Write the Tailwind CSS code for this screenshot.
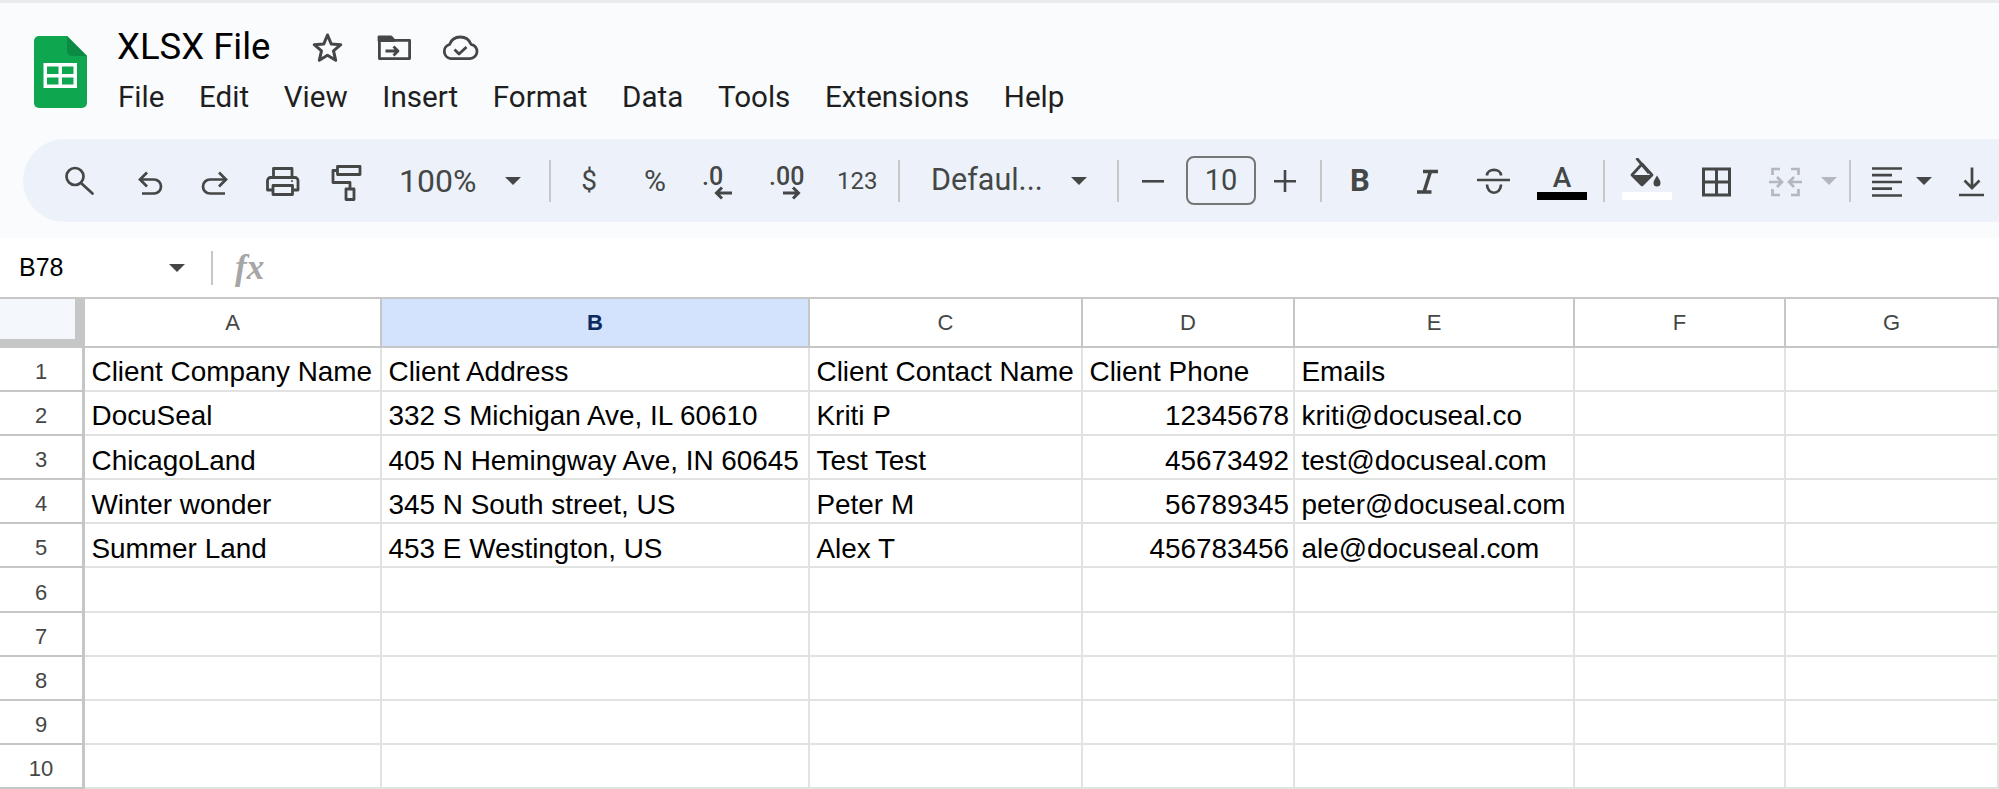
<!DOCTYPE html>
<html lang="en">
<head>
  <meta charset="UTF-8" />
  <title>XLSX File - Google Sheets</title>
  <script src="https://cdn.jsdelivr.net/npm/@tailwindcss/browser@4"></script>
</head>
<body class="bg-white overflow-hidden font-['Liberation_Sans',sans-serif]">
<div class="w-[1999px] h-[789px] overflow-hidden flex flex-col">

  <!-- title + menus -->
  <div class="h-[139px] bg-[#f9fbfd] border-t-[3px] border-[#e8eaed] flex pl-[34px] pt-[33px] shrink-0">
    <svg class="w-[53px] h-[72px]" viewBox="0 0 53 72">
      <path d="M5 0H33L53 20V67a5 5 0 0 1-5 5H5a5 5 0 0 1-5-5V5a5 5 0 0 1 5-5z" fill="#0fa650"/>
      <path d="M33 0L53 20H38a5 5 0 0 1-5-5z" fill="#0a8a43"/>
      <path d="M9.500 27H43V52H9.500z" fill="#fff"/>
      <path d="M13 30.500H24.500V38H13zM28 30.500H39.500V38H28zM13 41.500H24.500V48.500H13zM28 41.500H39.500V48.500H28z" fill="#0fa650"/>
    </svg>
    <div class="ml-[30px] -mt-[9px]">
      <div class="flex items-center h-[42px]">
        <span class="-mt-[2px] font-['Roboto',sans-serif] text-[36.5px] text-black w-[152px] whitespace-nowrap">XLSX File</span>
        <svg class="ml-[41px] w-[36px] h-[36px]" viewBox="0 0 36 36" fill="none" stroke="#444746" stroke-width="3" stroke-linejoin="round"><path d="M17.500 5L21.200 13.900 30.800 14.700 23.500 20.900 25.700 30.300 17.500 25.300 9.300 30.300 11.500 20.900 4.200 14.700 13.800 13.900z"/></svg>
        <svg class="ml-[30px] w-[38px] h-[36px]" viewBox="0 0 38 36" fill="none" stroke="#444746" stroke-width="2.800" stroke-linejoin="round"><path d="M3.400 28.600V7.400H15l3 3H33.600V28.600z"/><path d="M3 7H15l3 3.500H3z" fill="#444746"/><path d="M9.500 21H22M17.500 16.500L22 21 17.500 25.500"/></svg>
        <svg class="ml-[26px] w-[40px] h-[36px]" viewBox="0 0 40 36" fill="none" stroke="#444746" stroke-width="2.800" stroke-linejoin="round"><path d="M11 28.600H30a7.200 7.200 0 0 0 1-14.300A11.500 11.500 0 0 0 9.500 14.500 7.200 7.200 0 0 0 11 28.600z"/><path d="M14.500 19.500L19 24 26.500 17"/></svg>
      </div>
      <nav class="flex mt-[10px] ml-[1px] gap-[34.6px] font-['Roboto',sans-serif] text-[29.6px] leading-[36px] text-[#1f1f1f]">
        <span>File</span><span>Edit</span><span>View</span><span>Insert</span><span>Format</span><span>Data</span><span>Tools</span><span>Extensions</span><span>Help</span>
      </nav>
    </div>
  </div>

  <!-- toolbar -->
  <div class="bg-[#f9fbfd] pl-[23px] shrink-0">
    <div class="h-[83px] bg-[#edf2fa] rounded-l-[42px] flex items-center pl-[36px] font-['Roboto',sans-serif] text-[#444746]">
      <svg class="w-[40px] h-[40px]" viewBox="0 0 40 40" fill="none" stroke="#444746" stroke-width="2.700"><circle cx="16" cy="15.500" r="8.500"/><path d="M22 22L33.500 32.500" stroke-linecap="round"/></svg>
      <svg class="ml-[30px] w-[40px] h-[40px]" viewBox="0 0 40 40" fill="none" stroke="#444746" stroke-width="2.700"><path d="M18 11.500L11 18.500 18 25.500"/><path d="M11 18.500H25a7 7 0 0 1 0 14H13"/></svg>
      <svg class="ml-[26px] w-[40px] h-[40px]" viewBox="0 0 40 40" fill="none" stroke="#444746" stroke-width="2.700"><path d="M24 11.500L31 18.500 24 25.500"/><path d="M31 18.500H15a7 7 0 0 0 0 14H30"/></svg>
      <svg class="ml-[27px] w-[40px] h-[40px]" viewBox="0 0 40 40" fill="none" stroke="#444746" stroke-width="2.800" stroke-linejoin="round"><path d="M11.500 16V7.500H30V16"/><path d="M10 29H5.500V19.500a3 3 0 0 1 3-3H33a3 3 0 0 1 3 3V29H31"/><path d="M11 24.500H30.500V33.500H11z"/><circle cx="30" cy="20" r="1" fill="#444746" stroke="none"/></svg>
      <svg class="ml-[25px] w-[40px] h-[40px]" viewBox="0 0 40 40" fill="none" stroke="#444746" stroke-width="2.800" stroke-linejoin="round"><path d="M10.500 5.500H33V13.500H10.500z"/><path d="M10.500 9.500H6V21.500H23V28"/><path d="M19 28H27V38.500H19z"/></svg>
      <span class="ml-[32px] w-[77px] text-[32px] leading-none whitespace-nowrap">100%</span>
      <svg class="ml-[29px] w-[16px] h-[8px]" viewBox="0 0 16 8"><path d="M0 0h16L8 8z" fill="#444746"/></svg>
      <div class="ml-[28px] w-[2px] h-[42px] bg-[#c7c7c7]"></div>
      <span class="ml-[18px] w-[40px] text-center text-[28px] leading-none">$</span>
      <span class="ml-[26px] w-[40px] text-center text-[30px] leading-none">%</span>
      <div class="ml-[25px] w-[40px] h-[40px] relative text-[25px] font-medium leading-none">
        <span class="absolute left-[2px] top-[3px]">.0</span>
        <svg class="absolute left-[14px] top-[25px] w-[18px] h-[14px]" viewBox="0 0 18 14" fill="none" stroke="#444746" stroke-width="3"><path d="M18 7H3M8 1.500L2.500 7 8 12.500"/></svg>
      </div>
      <div class="ml-[28px] w-[40px] h-[40px] relative text-[25px] font-medium leading-none">
        <span class="absolute left-[1px] top-[3px]">.00</span>
        <svg class="absolute left-[15px] top-[25px] w-[18px] h-[14px]" viewBox="0 0 18 14" fill="none" stroke="#444746" stroke-width="3"><path d="M0 7h15M10 1.500L15.500 7 10 12.500"/></svg>
      </div>
      <span class="ml-[29px] w-[40px] text-center text-[24px] leading-none">123</span>
      <div class="ml-[21px] w-[2px] h-[42px] bg-[#c7c7c7]"></div>
      <span class="ml-[31px] w-[112px] text-[30.500px] leading-none whitespace-nowrap">Defaul...</span>
      <svg class="ml-[28px] w-[16px] h-[8px]" viewBox="0 0 16 8"><path d="M0 0h16L8 8z" fill="#444746"/></svg>
      <div class="ml-[30px] w-[2px] h-[42px] bg-[#c7c7c7]"></div>
      <svg class="ml-[14px] w-[40px] h-[40px]" viewBox="0 0 40 40"><path d="M9 19h22v2.600H9z" fill="#444746"/></svg>
      <div class="ml-[13px] w-[70px] h-[49px] border-2 border-[#747775] rounded-[8px] flex items-center justify-center text-[29px]">10</div>
      <svg class="ml-[9px] w-[40px] h-[40px]" viewBox="0 0 40 40"><path d="M9 19h22v2.600H9z M18.700 9h2.600v22h-2.600z" fill="#444746"/></svg>
      <div class="ml-[15px] w-[2px] h-[42px] bg-[#c7c7c7]"></div>
      <span class="ml-[18px] w-[40px] text-center text-[31px] font-bold leading-none">B</span>
      <svg class="ml-[27px] w-[40px] h-[40px]" viewBox="0 0 40 40" fill="none" stroke="#444746" stroke-width="3.500"><path d="M16 10.500H31M10 31H24.500M23.500 10.500L17 31"/></svg>
      <svg class="ml-[26px] w-[40px] h-[40px]" viewBox="0 0 40 40" fill="none" stroke="#444746" stroke-width="2.700"><path d="M4 19H37"/><path d="M14 14.500C14 7 28 7 28 14.500M14 23.500C14 34.500 28 34.500 28 23.500"/></svg>
      <div class="ml-[24px] w-[50px] h-[46px] mb-[7px] flex flex-col items-center justify-between">
        <span class="mt-[6px] text-[28px] font-medium leading-[36px] h-[32px]">A</span>
        <div class="w-[50px] h-[8px] bg-black"></div>
      </div>
      <div class="ml-[16px] w-[2px] h-[42px] bg-[#c7c7c7]"></div>
      <div class="ml-[17px] w-[50px] h-[46px] mb-[7px] flex flex-col justify-between">
        <svg class="mt-[4px] w-[44px] h-[30px]" viewBox="0 0 44 30">
          <path d="M20 6L30 17 20 27 10 17z" fill="none" stroke="#444746" stroke-width="2.800" stroke-linejoin="round"/>
          <path d="M10 17H30L20 27.500z" fill="#444746"/>
          <path d="M14.500 0L27 15" fill="none" stroke="#444746" stroke-width="2.800"/>
          <path d="M35 17.500C37 21 38.500 22.500 38.500 25a3.500 3.500 0 0 1-7 0C31.500 22.500 33 21 35 17.500z" fill="#444746"/>
        </svg>
        <div class="w-[50px] h-[8px] bg-white"></div>
      </div>
      <svg class="ml-[24px] w-[40px] h-[40px]" viewBox="0 0 40 40" fill="none" stroke="#444746" stroke-width="3"><path d="M7.500 8H33.500V34H7.500zM20.500 8V34M7.500 21H33.500"/></svg>
      <svg class="ml-[29px] w-[40px] h-[40px]" viewBox="0 0 40 40" fill="none" stroke="#b4b8bd" stroke-width="2.700"><path d="M15 8H7.500V14M7.500 28V34H15M26 8H33.500V14M33.500 28V34H26"/><path d="M4 21H17M12 16L17 21 12 26M37 21H24M29 16L24 21 29 26"/></svg>
      <svg class="ml-[16px] w-[16px] h-[8px]" viewBox="0 0 16 8"><path d="M0 0h16L8 8z" fill="#b4b8bd"/></svg>
      <div class="ml-[12px] w-[2px] h-[42px] bg-[#c7c7c7]"></div>
      <svg class="ml-[15px] w-[40px] h-[40px]" viewBox="0 0 40 40" fill="none" stroke="#444746" stroke-width="2.700"><path d="M6 7.500H36M6 14.200H26M6 21H36M6 27.700H26M6 34.500H36"/></svg>
      <svg class="ml-[10px] w-[16px] h-[8px]" viewBox="0 0 16 8"><path d="M0 0h16L8 8z" fill="#444746"/></svg>
      <svg class="ml-[19px] w-[40px] h-[40px]" viewBox="0 0 40 40" fill="none" stroke="#444746" stroke-width="2.700"><path d="M21 6.500V27M13.500 19.500L21 27 28.500 19.500M8 34H33"/></svg>
    </div>
  </div>

  <!-- formula bar -->
  <div class="mt-[16px] bg-white h-[59px] flex items-center shrink-0 relative">
    <div class="absolute inset-x-0 -top-[16px] h-[16px] bg-[#f9fbfd]"></div>
    <span class="ml-[19px] w-[150px] text-[25px] text-black">B78</span>
    <svg class="w-[16px] h-[8px]" viewBox="0 0 16 8"><path d="M0 0h16L8 8z" fill="#444746"/></svg>
    <div class="ml-[26px] w-[2px] h-[34px] bg-[#c7c7c7]"></div>
    <span class="ml-[22px] font-['Liberation_Serif',serif] italic font-bold text-[35px] text-[#a6a6a6] leading-none">fx</span>
  </div>

  <!-- grid -->
  <div id="sheet" class="grid grid-cols-[85px_297px_428px_273px_212px_280px_211px_213px] grid-rows-[48.5px] auto-rows-[44.2px] border-t-2 border-[#c7c7c7] text-[27.9px] text-black"></div>
</div>

<script>
  const letters = ['A', 'B', 'C', 'D', 'E', 'F', 'G'];
  const rows = [
    ['Client Company Name', 'Client Address', 'Client Contact Name', 'Client Phone', 'Emails'],
    ['DocuSeal', '332 S Michigan Ave, IL 60610', 'Kriti P', '12345678', 'kriti@docuseal.co'],
    ['ChicagoLand', '405 N Hemingway Ave, IN 60645', 'Test Test', '45673492', 'test@docuseal.com'],
    ['Winter wonder', '345 N South street, US', 'Peter M', '56789345', 'peter@docuseal.com'],
    ['Summer Land', '453 E Westington, US', 'Alex T', '456783456', 'ale@docuseal.com'],
    [], [], [], [], []
  ];

  let html = '<div class="bg-[#f4f7fb] border-r-[10px] border-b-[9px] border-[#c4c7c5]"></div>';
  letters.forEach(l => {
    html += l === 'B'
      ? `<div class="bg-[#d3e3fd] border-r-2 border-b-2 border-[#c4c7c5] flex items-center justify-center text-[22px] font-bold text-[#0b2a5e]">${l}</div>`
      : `<div class="bg-white border-r-2 border-b-2 border-[#c4c7c5] flex items-center justify-center text-[22px] text-[#444746]">${l}</div>`;
  });
  rows.forEach((row, i) => {
    html += `<div class="border-r-[3px] border-b-2 border-[#c4c7c5] flex items-center justify-center pt-[5px] text-[22px] text-[#444746]">${i + 1}</div>`;
    letters.forEach((l, c) => {
      const val = row[c] || '';
      html += c === 3 && i > 0
        ? `<div class="border-r-2 border-b-2 border-[#e1e3e1] flex items-center justify-end pt-[7px] pr-[4px] whitespace-nowrap overflow-hidden">${val}</div>`
        : `<div class="border-r-2 border-b-2 border-[#e1e3e1] flex items-center pt-[7px] pl-[6.5px] whitespace-nowrap overflow-hidden">${val}</div>`;
    });
  });
  document.getElementById('sheet').innerHTML = html;
</script>
</body>
</html>
